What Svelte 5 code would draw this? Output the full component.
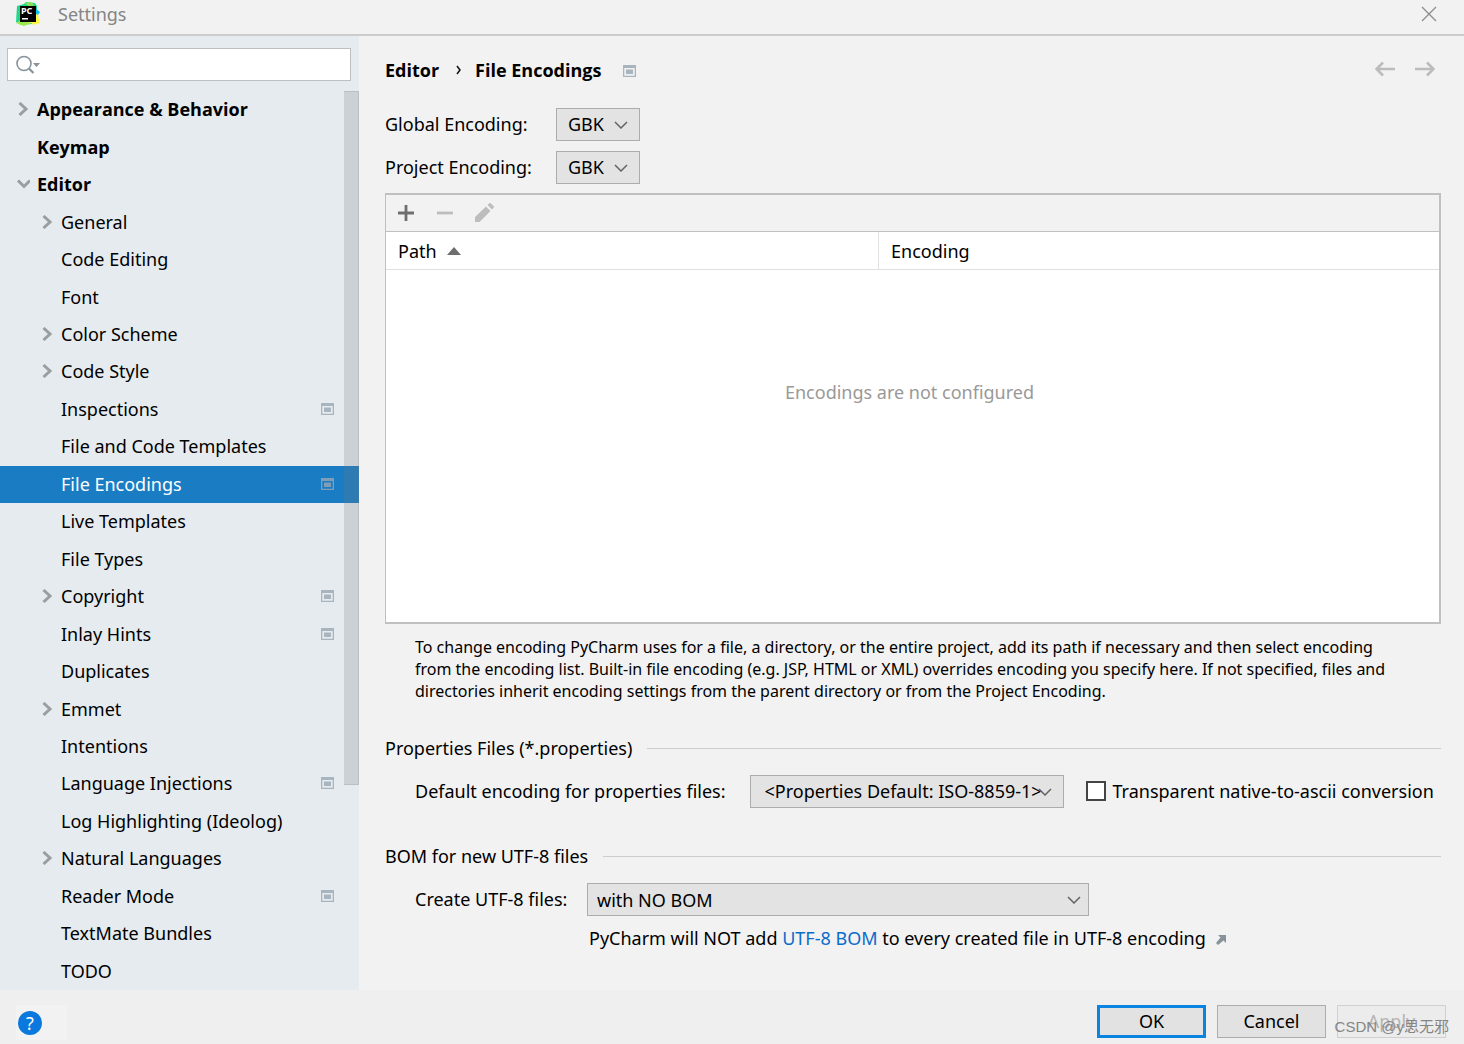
<script>
  const tree = [
    { label: 'Appearance & Behavior', arrow: 'right', top: true },
    { label: 'Keymap', top: true },
    { label: 'Editor', arrow: 'down', top: true },
    { label: 'General', arrow: 'right' },
    { label: 'Code Editing' },
    { label: 'Font' },
    { label: 'Color Scheme', arrow: 'right' },
    { label: 'Code Style', arrow: 'right' },
    { label: 'Inspections', project: true },
    { label: 'File and Code Templates' },
    { label: 'File Encodings', project: true },
    { label: 'Live Templates' },
    { label: 'File Types' },
    { label: 'Copyright', arrow: 'right', project: true },
    { label: 'Inlay Hints', project: true },
    { label: 'Duplicates' },
    { label: 'Emmet', arrow: 'right' },
    { label: 'Intentions' },
    { label: 'Language Injections', project: true },
    { label: 'Log Highlighting (Ideolog)' },
    { label: 'Natural Languages', arrow: 'right' },
    { label: 'Reader Mode', project: true },
    { label: 'TextMate Bundles' },
    { label: 'TODO' }
  ];

  let selected = $state('File Encodings');
  let query = $state('');
  let globalEncoding = $state('GBK');
  let projectEncoding = $state('GBK');
  let nativeToAscii = $state(false);
</script>

{#snippet projectIcon()}
  <svg class="project-icon" width="13" height="12" viewBox="0 0 13 12" aria-hidden="true">
    <path fill="currentColor" fill-rule="evenodd" d="M0 0h13v12H0zM1.300 3v7.700h10.400V3z" />
    <path fill="currentColor" d="M3 4.500h7v4.500H3z" />
  </svg>
{/snippet}

{#snippet chevron()}
  <svg class="chevron" width="14" height="8" viewBox="0 0 14 8" aria-hidden="true">
    <path d="M1 1l6 6 6-6" fill="none" stroke="#636363" stroke-width="1.5" />
  </svg>
{/snippet}

<div class="dialog">
  <header class="titlebar">
    <svg width="24" height="24" viewBox="0 0 24 24" aria-hidden="true">
      <path fill="#21d789" d="M1 4l7-2 2-2 9 1 2 3v8l-5 10-11 1-5-3z" />
      <path fill="#8be05a" d="M9 1l5-1 5 3-6 2z" />
      <path fill="#07c3f2" d="M19 6l5 4-3 4-3-2z" />
      <path fill="#fcf84a" d="M20 12l2 1 2 8-6 2-3-2-4 2-7-1 3-4z" />
      <path fill="#9be84b" d="M0 21l5-3 10 3-7 3z" />
      <path d="M4 4h16v16H4z" />
      <text x="5" y="12" fill="#fff" font-size="9" font-weight="bold">PC</text>
      <path fill="#fff" d="M6 16h6v1.500H6z" />
    </svg>
    <span class="title">Settings</span>
    <button class="icon-button" aria-label="Close">
      <svg width="16" height="16" viewBox="0 0 16 16">
        <path d="M1 1l14 14M15 1L1 15" fill="none" stroke="#8c8c8c" stroke-width="1.3" />
      </svg>
    </button>
  </header>

  <div class="content">
    <aside>
      <div class="search">
        <svg width="26" height="20" viewBox="0 0 26 20" aria-hidden="true">
          <circle cx="8" cy="8.5" r="7" fill="none" stroke="#87939a" stroke-width="1.6" />
          <path d="M13 13.500l4.500 4.500" stroke="#87939a" stroke-width="2.200" />
          <path d="M17 8h7l-3.500 4z" fill="#87939a" />
        </svg>
        <input type="text" aria-label="Search settings" bind:value={query} />
      </div>

      <nav>
        {#each tree as item}
          <button
            class="node"
            class:top={item.top}
            class:selected={item.label === selected}
            onclick={() => (selected = item.label)}
          >
            <span class="arrow">
              {#if item.arrow === 'right'}
                <svg width="14" height="14" viewBox="0 0 14 14">
                  <path d="M3.500 1L10 7l-6.500 6" fill="none" stroke="#9b9ea1" stroke-width="3" />
                </svg>
              {:else if item.arrow === 'down'}
                <svg width="14" height="14" viewBox="0 0 14 14">
                  <path d="M2 3.500l6 6 6-6" fill="none" stroke="#9b9ea1" stroke-width="3" />
                </svg>
              {/if}
            </span>
            <span class="label">{item.label}</span>
            {#if item.project}
              {@render projectIcon()}
            {/if}
          </button>
        {/each}
        <div class="scroll-thumb"></div>
      </nav>
    </aside>

    <main>
      <div class="crumbs">
        <h1>Editor</h1>
        <svg width="6" height="10" viewBox="0 0 6 10" aria-hidden="true">
          <path d="M1 1l3 4-3 4" fill="none" stroke="#111" stroke-width="1.500" />
        </svg>
        <h1>File Encodings</h1>
        {@render projectIcon()}
        <div class="history">
          <button class="icon-button" aria-label="Back">
            <svg width="20" height="16" viewBox="0 0 20 16">
              <path d="M20 8H2M8 1.500L1.500 8 8 14.500" fill="none" stroke="#bcbcbc" stroke-width="2.600" />
            </svg>
          </button>
          <button class="icon-button" aria-label="Forward">
            <svg width="20" height="16" viewBox="0 0 20 16">
              <path d="M0 8h18M12 1.500L18.500 8 12 14.500" fill="none" stroke="#bcbcbc" stroke-width="2.600" />
            </svg>
          </button>
        </div>
      </div>

      <div class="encodings">
        <label for="global">Global Encoding:</label>
        <div class="combo small">
          <select id="global" bind:value={globalEncoding}>
            <option>GBK</option>
            <option>UTF-8</option>
          </select>
          {@render chevron()}
        </div>
        <label for="project">Project Encoding:</label>
        <div class="combo small">
          <select id="project" bind:value={projectEncoding}>
            <option>GBK</option>
            <option>UTF-8</option>
          </select>
          {@render chevron()}
        </div>
      </div>

      <section class="mappings">
        <div class="toolbar">
          <button class="icon-button" aria-label="Add">
            <svg width="20" height="20" viewBox="0 0 20 20">
              <path d="M2 10h16M10 2v16" stroke="#6e6e6e" stroke-width="2.800" />
            </svg>
          </button>
          <button class="icon-button" aria-label="Remove" disabled>
            <svg width="20" height="20" viewBox="0 0 20 20">
              <path d="M2 10h16" stroke="#bdbdbd" stroke-width="2.800" />
            </svg>
          </button>
          <button class="icon-button" aria-label="Edit" disabled>
            <svg width="20" height="20" viewBox="0 0 20 20">
              <path fill="#bdbdbd" d="M1 19v-5L12 3.500l4.500 4.500L5.500 19zM13.500 2l1.500-1.500a1.500 1.500 0 0 1 2 0l2.500 2.500a1.500 1.500 0 0 1 0 2L18 6.500z" />
            </svg>
          </button>
        </div>
        <table>
          <thead>
            <tr>
              <th>
                Path
                <svg width="14" height="8" viewBox="0 0 14 8" aria-hidden="true">
                  <path fill="#6e6e6e" d="M0 8l7-8 7 8z" />
                </svg>
              </th>
              <th>Encoding</th>
            </tr>
          </thead>
          <tbody>
            <tr>
              <td colspan="2">Encodings are not configured</td>
            </tr>
          </tbody>
        </table>
      </section>

      <p class="hint">
        To change encoding PyCharm uses for a file, a directory, or the entire project, add its path if necessary and then select encoding from the encoding list. Built-in file encoding (e.g. JSP, HTML or XML) overrides encoding you specify here. If not specified, files and directories inherit encoding settings from the parent directory or from the Project Encoding.
      </p>

      <h2>Properties Files (*.properties)</h2>
      <div class="row">
        <label for="properties">Default encoding for properties files:</label>
        <div class="combo properties">
          <select id="properties">
            <option>&lt;Properties Default: ISO-8859-1&gt;</option>
          </select>
          {@render chevron()}
        </div>
        <label class="check">
          <input type="checkbox" bind:checked={nativeToAscii} />
          Transparent native-to-ascii conversion
        </label>
      </div>

      <h2>BOM for new UTF-8 files</h2>
      <div class="row bom-row">
        <label for="bom">Create UTF-8 files:</label>
        <div class="combo bom">
          <select id="bom">
            <option>with NO BOM</option>
            <option>with BOM</option>
          </select>
          {@render chevron()}
        </div>
        <p class="note">
          PyCharm will NOT add <a href="#bom">UTF-8 BOM</a> to every created file in UTF-8 encoding
          <svg width="10" height="10" viewBox="0 0 10 10" aria-hidden="true">
            <path fill="#87939a" d="M2 0h8v8L7.500 5.500 2 10 0 8l4.500-5.500z" />
          </svg>
        </p>
      </div>
    </main>
  </div>

  <footer>
    <button class="help" aria-label="Help"><span>?</span></button>
    <div class="actions">
      <button class="action primary">OK</button>
      <button class="action">Cancel</button>
      <button class="action" disabled>Apply</button>
    </div>
    <span class="watermark">CSDN @y思无邪</span>
  </footer>
</div>

<style>
  :global(body) {
    margin: 0;
    background: #f2f2f2;
  }

  .dialog {
    display: flex;
    flex-direction: column;
    min-height: 100vh;
    font-family: "Noto Sans", "Noto Sans CJK SC", sans-serif;
    font-size: 18px;
    line-height: 24px;
    color: #000;
  }

  button,
  input,
  select {
    font: inherit;
    color: inherit;
  }

  .icon-button {
    display: flex;
    padding: 0;
    border: none;
    background: none;
  }

  .titlebar {
    display: flex;
    align-items: center;
    height: 28px;
    padding: 0 27px 6px 16px;
    border-bottom: 2px solid #cbcccd;
  }

  .title {
    flex: 1;
    margin-left: 18px;
    color: #858585;
  }

  .content {
    flex: 1;
    display: flex;
  }

  aside {
    display: flex;
    flex-direction: column;
    flex: 0 0 359px;
    background: #e5ebef;
  }

  .search {
    display: flex;
    align-items: center;
    height: 31px;
    margin: 12px 8px 10px 7px;
    padding-left: 8px;
    border: 1px solid #bdbfc0;
    background: #fff;
  }

  .search input {
    flex: 1;
    min-width: 0;
    border: none;
    outline: none;
    background: none;
  }

  nav {
    position: relative;
    flex: 1;
    display: grid;
    grid-auto-rows: 1fr;
  }

  .node {
    display: flex;
    align-items: center;
    padding: 0 25px 1px 40px;
    border: none;
    background: none;
    text-align: left;
  }

  .node.top {
    padding-left: 16px;
    font-family: "Open Sans", sans-serif;
    font-weight: bold;
  }

  .node.selected {
    background: #1a7dc4;
    color: #fff;
  }

  .arrow {
    display: flex;
    width: 21px;
  }

  .label {
    flex: 1;
  }

  .project-icon {
    color: #a9b5be;
  }

  .selected .project-icon {
    color: #7f9db4;
  }

  .scroll-thumb {
    position: absolute;
    top: 0;
    right: 0;
    width: 14px;
    height: 77%;
    border: 1px solid rgba(120, 120, 125, 0.2);
    border-left: none;
    background: rgba(120, 120, 125, 0.22);
  }

  main {
    flex: 1;
    min-width: 0;
    padding: 20px 23px 0 26px;
  }

  .crumbs {
    display: flex;
    align-items: center;
    height: 28px;
  }

  h1 {
    margin: 0;
    font-family: "Open Sans", sans-serif;
    font-size: 18px;
    font-weight: bold;
  }

  .crumbs > svg {
    margin: 0 13px 0 17px;
  }

  .crumbs > :global(.project-icon) {
    margin: 1px 22px 0;
  }

  .history {
    display: flex;
    gap: 20px;
    margin-left: auto;
    padding: 0 6px 2px 0;
  }

  .encodings {
    display: grid;
    grid-template-columns: 171px auto;
    justify-content: start;
    align-items: center;
    gap: 10px 0;
    margin: 24px 0 9px;
  }

  .encodings label,
  .row label {
    padding-bottom: 1px;
  }

  .combo {
    position: relative;
  }

  .combo select {
    display: block;
    width: 100%;
    height: 33px;
    padding: 0 0 1px 11px;
    border: 1px solid #acacac;
    border-radius: 0;
    appearance: none;
    background: #e3e3e3;
    outline: none;
  }

  .chevron {
    position: absolute;
    top: 13px;
    right: 12px;
    pointer-events: none;
  }

  .small {
    width: 84px;
  }

  .properties {
    width: 314px;
    margin-left: 25px;
  }

  .properties select {
    padding-left: 13px;
  }

  .bom {
    width: 502px;
  }

  .bom .chevron {
    right: 8px;
  }

  .bom select {
    padding: 0 0 0 9px;
  }

  .mappings {
    border: 1px solid #c0c0c0;
    border-width: 2px 2px 2px 1px;
    background: #fff;
  }

  .toolbar {
    display: flex;
    align-items: center;
    gap: 19px;
    height: 36px;
    padding-left: 10px;
    border-bottom: 1px solid #c0c0c0;
    background: #f2f2f2;
  }

  table {
    width: 100%;
    border-collapse: collapse;
    table-layout: fixed;
  }

  th {
    height: 37px;
    padding: 0 12px;
    border-bottom: 1px solid #e0e0e0;
    font-weight: normal;
    text-align: left;
  }

  th:first-child {
    width: 468px;
    border-right: 1px solid #e0e0e0;
  }

  th svg {
    margin-left: 6px;
    vertical-align: 3px;
  }

  td {
    height: 244px;
    padding: 0 6px 108px 0;
    color: #999;
    text-align: center;
  }

  .hint {
    margin: 12px 40px 34px 30px;
    font-size: 16px;
    line-height: 22px;
  }

  h2 {
    display: flex;
    align-items: center;
    gap: 15px;
    margin: 0;
    font-size: 18px;
    font-weight: normal;
  }

  h2::after {
    content: "";
    flex: 1;
    border-top: 1px solid #cdcdcd;
  }

  .row {
    display: flex;
    align-items: center;
    margin: 15px 0 36px 30px;
    white-space: nowrap;
  }

  .check {
    display: flex;
    align-items: center;
    gap: 6px;
    margin-left: 22px;
  }

  .check input {
    appearance: none;
    width: 20px;
    height: 20px;
    margin: 0;
    border: 2px solid #444;
    background: #fff;
  }

  .check input:checked {
    background: #444;
  }

  .bom-row {
    display: grid;
    grid-template-columns: 172px auto;
    justify-content: start;
    margin-bottom: 20px;
    row-gap: 10px;
  }

  .note {
    grid-column: 2;
    margin: 0;
    padding-left: 2px;
  }

  .note svg {
    margin-left: 5px;
  }

  a {
    color: #0a6cc9;
    text-decoration: none;
  }

  footer {
    position: relative;
    display: flex;
    align-items: center;
    justify-content: space-between;
    height: 54px;
    padding: 0 18px 0 16px;
    background: #efefef;
  }

  .help {
    width: 51px;
    height: 35px;
    margin-top: 11px;
    padding: 0 2px;
    border: none;
    background: #f2f2f2;
    text-align: left;
  }

  .help span {
    display: block;
    width: 24px;
    border-radius: 50%;
    background: #0a78dc;
    color: #fff;
    text-align: center;
  }

  .actions {
    display: flex;
    gap: 11px;
    padding-top: 9px;
  }

  .action {
    width: 109px;
    height: 33px;
    padding: 0 0 2px;
    border: 1px solid #acacac;
    background: #e2e2e2;
  }

  .action.primary {
    border: 3px solid #0a84e0;
  }

  .action:disabled {
    border-color: #d0d0d0;
    background: #ececec;
    color: #b4b4b4;
  }

  .watermark {
    position: absolute;
    right: 15px;
    bottom: 5px;
    font-family: "Liberation Sans", "Noto Sans CJK SC", sans-serif;
    font-size: 15px;
    color: #858585;
  }
</style>
